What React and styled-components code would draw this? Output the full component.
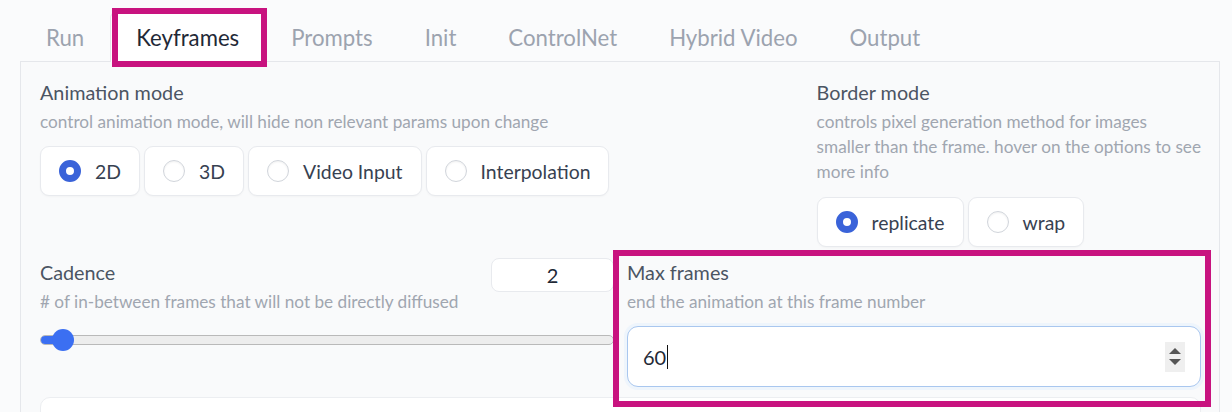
import styled, { createGlobalStyle } from "styled-components";

const GlobalStyle = createGlobalStyle`
  body {
    margin: 0;
    background: #fafbfc;
    font-family: "Lato", "Noto Sans", sans-serif;
  }
`;

const Page = styled.div`
  position: relative;
  width: 1232px;
  height: 412px;
  overflow: hidden;
  padding: 12px 12px 0 20px;
  box-sizing: border-box;
`;

const TabBar = styled.div`
  display: flex;
  border-bottom: 1px solid #e5e7eb;
  height: 49px;
`;

const Tab = styled.div`
  padding: 0 25px;
  height: 50px;
  display: flex;
  align-items: center;
  font-size: 22.2px;
  color: ${(p) => (p.$active ? "#1f2937" : "#9ca3af")};
  background: ${(p) => (p.$active ? "#ffffff" : "transparent")};
  border: 1px solid ${(p) => (p.$active ? "#e5e7eb" : "transparent")};
  border-bottom: none;
  border-radius: 6px 6px 0 0;
  box-sizing: border-box;
`;

const Panel = styled.div`
  border: 1px solid #e5e7eb;
  border-top: none;
  background: #f9fafb;
  padding: 17px 18px 0 19px;
  height: 400px;
  box-sizing: border-box;
`;

const TopRow = styled.div`
  display: grid;
  grid-template-columns: 2fr 1fr;
  column-gap: 15px;
`;

const MidRow = styled.div`
  display: grid;
  grid-template-columns: 1fr 1fr;
  column-gap: 13px;
  margin-top: 12px;
`;

const Block = styled.div`
  display: flex;
  flex-direction: column;
`;

const Label = styled.div`
  font-size: 19.8px;
  line-height: 26px;
  color: #4b5563;
`;

const Info = styled.div`
  font-size: 17.2px;
  line-height: 25px;
  color: #a0a6b0;
  margin-top: 4px;
  white-space: nowrap;
`;

const RadioGroup = styled.div`
  display: flex;
  gap: 4px;
  margin-top: ${(p) => p.$gap || 12}px;
`;

const RadioItem = styled.div`
  display: flex;
  align-items: center;
  gap: 14px;
  height: 50px;
  padding: 0 18px;
  background: #ffffff;
  border: 1px solid #e8eaee;
  border-radius: 9px;
  box-sizing: border-box;
  box-shadow: 0 1px 2px rgba(0, 0, 0, 0.03);
  font-size: 19.4px;
  color: #374151;
`;

const Dot = styled.span`
  width: 22px;
  height: 22px;
  border-radius: 50%;
  box-sizing: border-box;
  flex-shrink: 0;
  ${(p) =>
    p.$checked
      ? `background: #ffffff; border: 7px solid #3a63d9;`
      : `background: #ffffff; border: 1px solid #d1d5db; box-shadow: inset 0 1px 2px rgba(0,0,0,0.06);`}
`;

const HeadLine = styled.div`
  display: flex;
  justify-content: space-between;
  align-items: flex-start;
  height: 26px;
`;

const SmallNumber = styled.div`
  width: 123px;
  height: 34px;
  margin-top: -1px;
  background: #ffffff;
  border: 1px solid #e8eaee;
  border-radius: 8px;
  box-sizing: border-box;
  display: flex;
  align-items: center;
  justify-content: center;
  font-size: 20px;
  color: #1f2937;
`;

const Track = styled.div`
  position: relative;
  height: 10px;
  margin-top: 21px;
  background: #ededed;
  border: 1px solid #b9b9b9;
  border-radius: 5px;
  box-sizing: border-box;
`;

const Fill = styled.div`
  height: 100%;
  background: #3b6ff2;
  border-radius: 5px 0 0 5px;
`;

const Thumb = styled.div`
  position: absolute;
  top: 50%;
  width: 22px;
  height: 22px;
  margin: -11px 0 0 -11px;
  border-radius: 50%;
  background: #3b6ff2;
`;

const BigInput = styled.div`
  position: relative;
  height: 61px;
  margin-top: 12px;
  background: #ffffff;
  border: 1px solid #a9c7ef;
  border-radius: 11px;
  box-sizing: border-box;
  box-shadow: 0 0 0 3px rgba(219, 234, 254, 0.35);
  display: flex;
  align-items: center;
  padding: 0 15px;
  font-size: 20px;
  color: #1f2937;
`;

const Caret = styled.span`
  display: inline-block;
  width: 1px;
  height: 24px;
  background: #111;
  margin-left: 1px;
`;

const Spinner = styled.div`
  margin-left: auto;
  width: 20px;
  height: 30px;
  background: #efefef;
  display: flex;
  flex-direction: column;
  align-items: center;
  justify-content: center;
  gap: 5px;
`;

const Arrow = styled.span`
  width: 0;
  height: 0;
  border-left: 6px solid transparent;
  border-right: 6px solid transparent;
  ${(p) => (p.$up ? "border-bottom: 6px solid #555;" : "border-top: 6px solid #555;")}
`;

const NextBox = styled.div`
  height: 40px;
  margin-top: 10px;
  background: #ffffff;
  border: 1px solid #eceef1;
  border-radius: 10px;
`;

const Highlight = styled.div`
  position: absolute;
  border: 6px solid #c8137f;
  box-sizing: border-box;
  pointer-events: none;
`;

const tabs = ["Run", "Keyframes", "Prompts", "Init", "ControlNet", "Hybrid Video", "Output"];

const Radio = ({ label, checked }) => (
  <RadioItem>
    <Dot $checked={checked} />
    {label}
  </RadioItem>
);

export default function App() {
  return (
    <>
      <GlobalStyle />
      <Page>
        <TabBar>
          {tabs.map((t) => (
            <Tab key={t} $active={t === "Keyframes"}>
              {t}
            </Tab>
          ))}
        </TabBar>
        <Panel>
          <TopRow>
            <Block>
              <Label>Animation mode</Label>
              <Info>control animation mode, will hide non relevant params upon change</Info>
              <RadioGroup>
                <Radio label="2D" checked />
                <Radio label="3D" />
                <Radio label="Video Input" />
                <Radio label="Interpolation" />
              </RadioGroup>
            </Block>
            <Block>
              <Label>Border mode</Label>
              <Info>
                controls pixel generation method for images
                <br />
                smaller than the frame. hover on the options to see
                <br />
                more info
              </Info>
              <RadioGroup $gap={13}>
                <Radio label="replicate" checked />
                <Radio label="wrap" />
              </RadioGroup>
            </Block>
          </TopRow>
          <MidRow>
            <Block>
              <HeadLine>
                <Label>Cadence</Label>
                <SmallNumber>2</SmallNumber>
              </HeadLine>
              <Info># of in-between frames that will not be directly diffused</Info>
              <Track>
                <Fill style={{ width: `${(22 / 573) * 100}%` }} />
                <Thumb style={{ left: `${(22 / 573) * 100}%` }} />
              </Track>
            </Block>
            <Block>
              <Label>Max frames</Label>
              <Info>end the animation at this frame number</Info>
              <BigInput>
                60
                <Caret />
                <Spinner>
                  <Arrow $up />
                  <Arrow />
                </Spinner>
              </BigInput>
            </Block>
          </MidRow>
          <NextBox />
        </Panel>
        <Highlight style={{ left: 112, top: 8, width: 155, height: 59 }} />
        <Highlight style={{ left: 613, top: 250, width: 598, height: 157 }} />
      </Page>
    </>
  );
}
